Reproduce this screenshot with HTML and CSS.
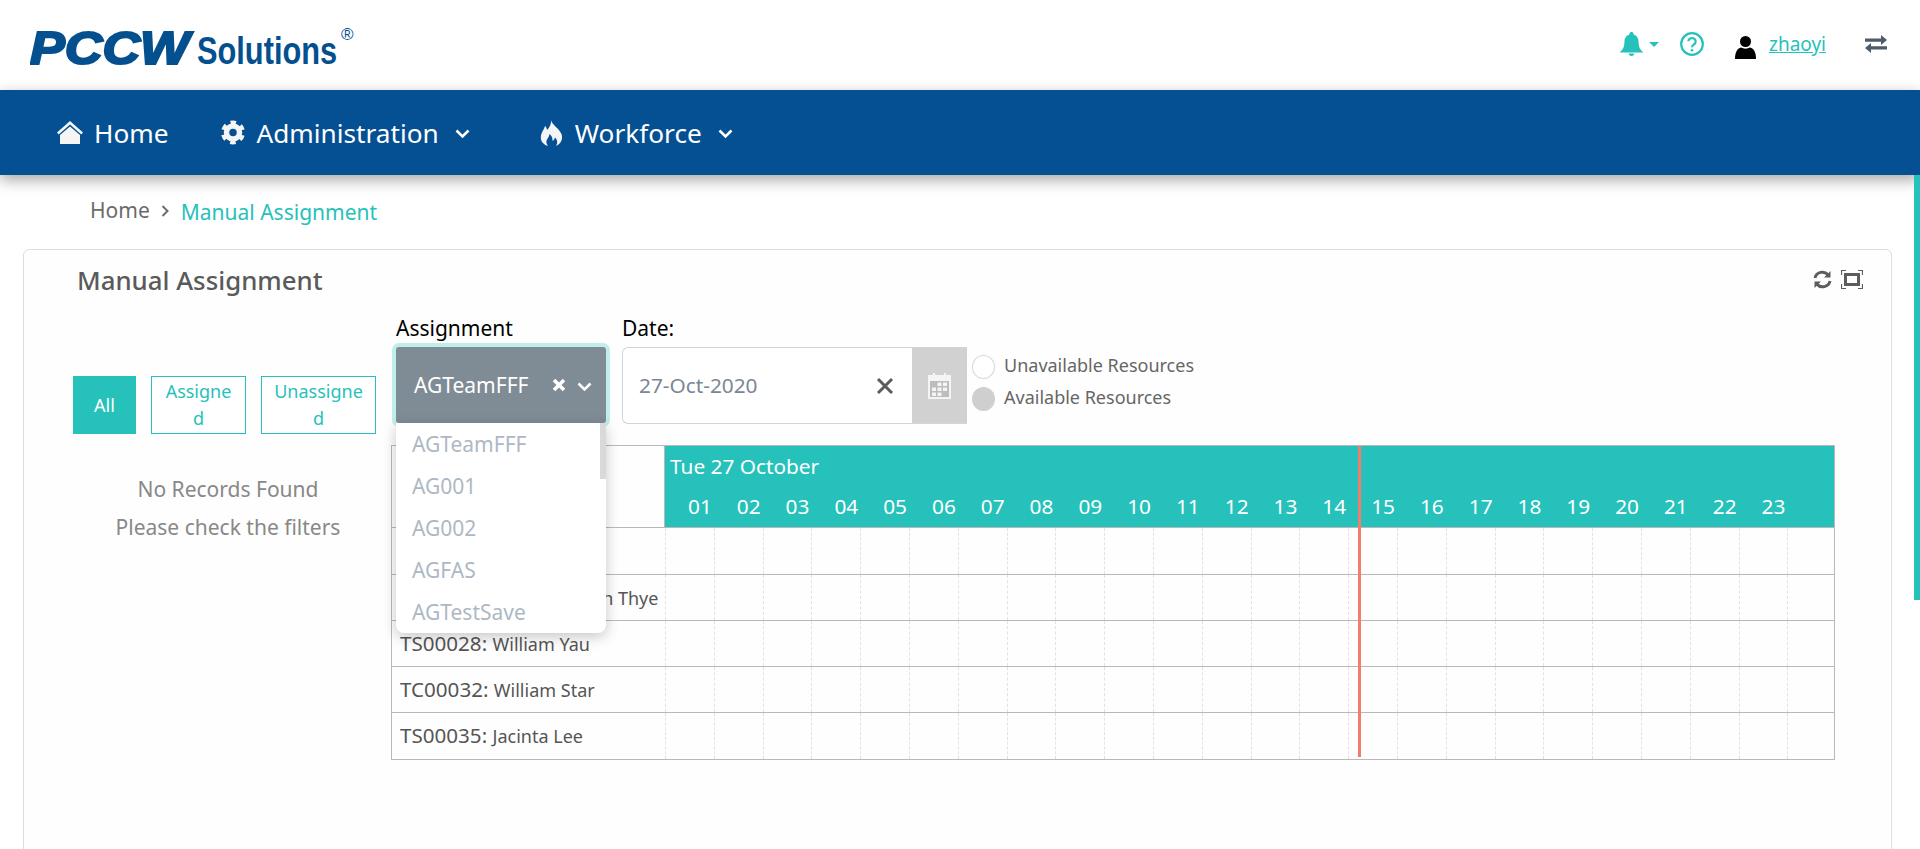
FILE: index.html
```html
<!DOCTYPE html>
<html>
<head>
<meta charset="utf-8">
<title>Manual Assignment</title>
<link rel="stylesheet" href="styles.css">
</head>
<body>

<div class="topbar">
	<svg class="logo" width="340" height="70" viewBox="0 0 340 70">
		<text class="logoMain" transform="translate(0 54) scale(1.11 1)">PCCW</text>
		<text class="logoSub" transform="translate(167 54) scale(.81 1)">Solutions</text>
		<text class="logoReg" x="311" y="30">®</text>
	</svg>
	<div class="topIcons">
		<svg class="icoBell" width="25" height="24" viewBox="0 0 25 24"><path d="M12.500 0a2 2 0 0 1 2 2.600c3.400 1 5.100 3.800 5.100 7.400 0 5 1.400 7.600 4.900 10.500H.5C4 17.600 5.400 15 5.400 10c0-3.600 1.700-6.400 5.100-7.400a2 2 0 0 1 2-2.600zM9.800 21.500h5.400a2.700 2.500 0 0 1-5.400 0z"/></svg>
		<span class="caret"></span>
		<svg class="icoHelp" width="24" height="24" viewBox="0 0 24 24"><circle cx="12" cy="12" r="10.800"/><path d="M8.300 9.300a3.700 3.400 0 1 1 5.700 3c-1.300.9-2 1.400-2 2.900"/><circle class="dot" cx="12" cy="18.300" r="1.300"/></svg>
		<svg class="icoUser" width="21" height="23" viewBox="0 0 21 23"><circle cx="10.500" cy="5.500" r="5.500"/><path d="M0 23c0-6.500 2-10.500 6-11.500 2.500 1.500 6.500 1.500 9 0 4 1 6 5 6 11.500z"/></svg>
		<a class="userName">zhaoyi</a>
		<svg class="icoSwap" width="22" height="18" viewBox="0 0 22 18"><path d="M0 3.500h16V0l6 5-6 5V6.700H0zM22 11.300v3.200H6V18l-6-5 6-5v3.300z"/></svg>
	</div>
</div>

<div class="navbar">
	<div class="navItem navHome">
		<svg width="26" height="23" viewBox="0 0 26 23"><path d="M13 0 26 11.500l-1.700 1.900L13 3.400 1.700 13.400 0 11.500z"/><path d="M13 5.500 23 14v9H3v-9z"/></svg>
		Home
	</div>
	<div class="navItem navAdmin">
		<svg width="24" height="25" viewBox="0 0 24 24"><circle class="gearTeeth" cx="12" cy="12" r="10.200" transform="rotate(-30 12 12)"/><circle class="gearRing" cx="12" cy="12" r="6.500"/></svg>
		Administration
		<svg class="chev" width="15" height="10" viewBox="0 0 15 10"><path d="M1.500 1.500 7.500 7.500l6-6"/></svg>
	</div>
	<div class="navItem navWork">
		<svg width="23" height="26" viewBox="0 0 23 26"><path d="M11 0c1 5 8 8 10.500 14 1.700 5-.6 10-5.500 12 2-3 1.500-6-1-8.500-.5 2-1.500 3-2.500 3.500.3-3-1-5.500-3-7-.2 3-2.500 4.500-3 7-.4 2 .3 3.700 1.500 5C3 24.500 0 21 1 15.500 2 11 4 10 5 6c1.200 1 1.800 2.300 2 4C9.500 7.500 11.500 4 11 0z"/></svg>
		Workforce
		<svg class="chev" width="15" height="10" viewBox="0 0 15 10"><path d="M1.500 1.500 7.500 7.500l6-6"/></svg>
	</div>
</div>

<div class="crumbs">
	<span class="crumbHome">Home</span>
	<svg class="crumbSep" width="8" height="12" viewBox="0 0 8 12"><path d="M1.500 1 6.500 6l-5 5"/></svg>
	<span class="crumbNow">Manual Assignment</span>
</div>

<div class="panel">
	<div class="panelHead">
		<h2>Manual Assignment</h2>
		<div class="panelTools">
			<svg width="19" height="19" viewBox="0 0 19 19"><path d="M2 8a7.500 7.500 0 0 1 13-3.200M17 11a7.500 7.500 0 0 1-13 3.200"/><path class="fill" d="M17.500 1v6.500H11zM1.500 18v-6.500H8z"/></svg>
			<svg width="22" height="19" viewBox="0 0 22 19"><path class="thin" d="M.5 5V.5H5M17 .5h4.500V5M21.500 14v4.500H17M5 18.500H.5V14"/><rect x="4.500" y="4.500" width="13" height="10"/></svg>
		</div>
	</div>

	<div class="panelBody">
		<div class="sideCol">
			<div class="filterBtns">
				<div class="fBtn fBtnOn">All</div>
				<div class="fBtn fBtnMid">Assigned</div>
				<div class="fBtn fBtnWide">Unassigned</div>
			</div>
			<p class="noRec">No Records Found</p>
			<p class="noRec">Please check the filters</p>
		</div>

		<div class="mainCol">
			<div class="filterRow">
				<div class="assignBox">
					<label>Assignment</label>
					<div class="selectBox">
						<span class="selVal">AGTeamFFF</span>
						<svg class="selX" width="16" height="16" viewBox="0 0 16 16"><path d="M3 3l10 10M13 3 3 13"/></svg>
						<svg class="selChev" width="15" height="10" viewBox="0 0 15 10"><path d="M1.500 1.500 7.500 7.500l6-6"/></svg>
					</div>
					<div class="dropList">
						<div class="dropThumb"></div>
						<div class="dropOpt">AGTeamFFF</div>
						<div class="dropOpt">AG001</div>
						<div class="dropOpt">AG002</div>
						<div class="dropOpt">AGFAS</div>
						<div class="dropOpt">AGTestSave</div>
					</div>
				</div>
				<div class="dateBox">
					<label>Date:</label>
					<div class="dateField">
						<span class="dateVal">27-Oct-2020</span>
						<svg class="dateX" width="18" height="18" viewBox="0 0 18 18"><path d="M2 2l14 14M16 2 2 16"/></svg>
						<div class="dateBtn">
							<svg width="23" height="26" viewBox="0 0 23 26"><path d="M0 2h5V0h2v2h9V0h2v2h5v24H0z"/><rect class="calGrid" x="2" y="8" width="19" height="16"/><g class="calCells"><rect x="9.500" y="9.500" width="4" height="3.500"/><rect x="15" y="9.500" width="4" height="3.500"/><rect x="4" y="14.500" width="4" height="3.500"/><rect x="9.500" y="14.500" width="4" height="3.500"/><rect x="15" y="14.500" width="4" height="3.500"/><rect x="4" y="19.500" width="4" height="3.500"/><rect x="9.500" y="19.500" width="4" height="3.500"/></g></svg>
						</div>
					</div>
				</div>
				<div class="legend">
					<div class="legendRow"><span class="dotFree"></span>Unavailable Resources</div>
					<div class="legendRow"><span class="dotBusy"></span>Available Resources</div>
				</div>
			</div>

			<div class="sched" id="sched">
				<div class="schedHead">
					<div class="nameCorner"></div>
					<div class="headRight">
						<div class="headDate">Tue 27 October</div>
						<div class="hours" id="hours"></div>
					</div>
				</div>
				<div id="rows"></div>
				<div class="nowLine"></div>
			</div>
		</div>
	</div>
</div>

<div class="pageThumb"></div>

<script src="app.js"></script>
</body>
</html>
```

FILE: app.js
```js
var people = [
	["", ""],
	["TS00021: ", "Tan Kian Boon Thye"],
	["TS00028: ", "William Yau"],
	["TC00032: ", "William Star"],
	["TS00035: ", "Jacinta Lee"]
];

var hours = document.getElementById("hours");
for (let i = 1; i <= 24; i++) {
	const h = document.createElement("div");
	h.className = "hourCell";
	if (i < 24) {
		h.textContent = (i < 10 ? "0" : "") + i;
	}
	hours.appendChild(h);
}

var rows = document.getElementById("rows");
people.forEach(p => {
	const row = document.createElement("div");
	row.className = "schedRow";
	const name = document.createElement("div");
	name.className = "nameCell";
	name.innerHTML = p[0] + "<small>" + p[1] + "</small>";
	row.appendChild(name);
	const track = document.createElement("div");
	track.className = "track";
	for (let i = 0; i < 24; i++) {
		const c = document.createElement("div");
		c.className = "slot";
		track.appendChild(c);
	}
	row.appendChild(track);
	rows.appendChild(row);
});
```

FILE: styles.css
```css
html, body {margin: 0; padding: 0; height: 849px; overflow: hidden; background: #fff;}
body {font-family: "Noto Sans", sans-serif; color: #555;}

/* Top bar */
.topbar {height: 90px; display: flex; justify-content: space-between; background: #fff;}
.logo {margin: 10px 0 0 30px; display: block;}
.logoMain {font-family: "Liberation Sans", sans-serif; font-weight: bold; font-style: italic; font-size: 47px; fill: #04508f; stroke: #04508f; stroke-width: 2.200px;}
.logoSub {font-family: "Liberation Sans", sans-serif; font-weight: bold; font-size: 38px; fill: #04508f;}
.logoReg {font-family: "Liberation Sans", sans-serif; font-size: 17px; fill: #04508f;}
.topIcons {display: flex; align-items: flex-start; padding: 32px 33px 0 0;}
.icoBell {fill: #27c1bb;}
.caret {width: 0; height: 0; margin: 10px 0 0 5px; border-left: 5px solid transparent; border-right: 5px solid transparent; border-top: 5px solid #27c1bb;}
.icoHelp {margin-left: 21px; fill: none; stroke: #27c1bb; stroke-width: 2.200px;}
.icoHelp .dot {fill: #27c1bb; stroke: none;}
.icoUser {margin: 4px 0 0 31px; fill: #000;}
.userName {margin: 0 0 0 13px; font-size: 19px; line-height: 24px; color: #27c1bb; text-decoration: underline;}
.icoSwap {margin: 3px 0 0 39px; fill: #4d5b6b;}

/* Nav */
.navbar {height: 85px; display: flex; align-items: center; background: #045092; box-shadow: 0 5px 14px rgba(0,0,0,0.35); position: relative; color: #fff; font-size: 26.200px;}
.navItem {display: flex; align-items: center;}
.navItem svg {fill: #f5f5f5;}
.navHome {margin-left: 57px;}
.navHome svg {margin-right: 11px;}
.navAdmin {margin-left: 52px;}
.navAdmin svg {margin-right: 12px;}
.navWork {margin-left: 70px;}
.navWork svg {margin-right: 12px;}
.navItem .gearTeeth {fill: none; stroke: #f5f5f5; stroke-width: 3.600px; stroke-dasharray: 5.400 5.280; stroke-dashoffset: 2.700;}
.navItem .gearRing {fill: none; stroke: #f5f5f5; stroke-width: 5.500px;}
.navItem .chev {fill: none; stroke: #fff; stroke-width: 2.600px; margin: 2px 0 0 16px;}

/* Breadcrumb */
.crumbs {box-sizing: border-box; height: 74px; display: flex; align-items: center; padding: 0 0 2px 90px; font-size: 21px;}
.crumbHome {color: #6b6b6b; margin-top: -2px;}
.crumbSep {margin: 0 12px 0 11px; fill: none; stroke: #6b6b6b; stroke-width: 2px;}
.crumbNow {color: #27c1bb; margin-top: 1px;}

/* Panel */
.panel {margin: 0 28px 0 23px; height: 640px; border: 1px solid #dedede; border-radius: 6px; background: #fefefe;}
.panelHead {display: flex; justify-content: space-between; padding: 13px 28px 0 53px;}
.panelHead h2 {margin: -1px 0 1px; font-size: 25.800px; line-height: 36px; font-weight: 500; color: #5a5a5a;}
.panelTools {display: flex; gap: 9px; padding-top: 7px;}
.panelTools svg {fill: none; stroke: #5c5c5c; stroke-width: 3px;}
.panelTools .fill {fill: #5c5c5c; stroke: none;}
.panelTools .thin {stroke-width: 1.200px;}

.panelBody {display: flex; align-items: flex-start; padding-left: 49px;}
.sideCol {width: 303px; padding-top: 77px; flex-shrink: 0;}
.filterBtns {display: flex; gap: 15px; margin-bottom: 41px;}
.fBtn {box-sizing: border-box; height: 58px; display: flex; align-items: center; justify-content: center; text-align: center; border: 1px solid #27c1bb; color: #27c1bb; font-size: 18px; line-height: 27px; word-break: break-all; background: #fff;}
.fBtnOn {width: 63px; background: #27c1bb; color: #fff;}
.fBtnMid {width: 95px; padding: 0 10px;}
.fBtnWide {width: 115px; padding: 0 10px;}
.noRec {margin: 0 0 10px; width: 310px; text-align: center; font-size: 21px; line-height: 28px; color: #888;}

.mainCol {flex: 1; padding: 16px 56px 0 15px;}
.filterRow {display: flex; align-items: flex-start; height: 130px;}
.assignBox {position: relative; width: 210px; margin-left: 5px;}
.assignBox label, .dateBox label {display: block; font-size: 21px; line-height: 26px; height: 32px; color: #000;}
.selectBox {box-sizing: border-box; height: 76px; display: flex; align-items: center; padding: 0 14px 0 18px; background: #7f8b95; border-radius: 3px; box-shadow: 0 0 0 4px #bfeeeb; color: #fff; font-size: 21px;}
.selVal {flex: 1;}
.selX {fill: none; stroke: #fff; stroke-width: 3.600px; margin-right: 10px;}
.selChev {fill: none; stroke: #fff; stroke-width: 2.600px; margin-top: 3px;}

.dropList {position: absolute; left: 0; top: 108px; width: 210px; height: 210px; box-sizing: border-box; background: #fff; border-radius: 0 0 8px 8px; box-shadow: 0 4px 14px rgba(0,0,0,0.22); z-index: 5;}
.dropThumb {position: absolute; right: 0; top: 0; width: 6px; height: 56px; background: #d9d9d9;}
.dropOpt {height: 42px; line-height: 43px; padding-left: 16px; font-size: 21px; color: #aeb8c4;}

.dateBox {width: 345px; margin-left: 16px;}
.dateField {box-sizing: border-box; height: 77px; width: 345px; display: flex; align-items: center; background: #fff; border: 1px solid #d2d6dc; border-right: 0; border-radius: 6px 0 0 6px;}
.dateVal {flex: 1; padding: 0 0 2px 16px; font-size: 20.800px; color: #7b8794;}
.dateX {fill: none; stroke: #5c5c5c; stroke-width: 3px; margin-right: 18px;}
.dateBtn {width: 55px; height: 75px; display: flex; align-items: center; justify-content: center; background: #d1d1d1;}
.dateBtn svg {fill: #f4f4f4;}
.calGrid {fill: #bdbdbd;}
.calCells rect {fill: #f4f4f4;}

.legend {margin: 34px 0 0 5px; font-size: 18px; color: #666;}
.legendRow {display: flex; align-items: center; height: 32px; line-height: 32px;}
.dotFree, .dotBusy {box-sizing: border-box; width: 23px; height: 24px; border-radius: 50%; margin: 4px 9px 0 0;}
.dotFree {background: #fff; border: 1px solid #d8d8d8;}
.dotBusy {background: #cfcfcf;}

/* Schedule */
.sched {position: relative; width: 1444px; box-sizing: border-box; border: 1px solid #b9b9b9;}
.schedHead {display: flex; height: 81px; border-bottom: 1px solid #b9b9b9;}
.nameCorner {width: 272px; flex-shrink: 0; border-right: 1px solid #b9b9b9;}
.headRight {flex: 1; min-width: 0; background: #27c1bb; color: #fff;}
.headDate {height: 42px; line-height: 41px; padding-left: 5px; font-size: 20.800px;}
.hours {display: flex;}
.hourCell {width: 48.800px; flex-shrink: 0; box-sizing: border-box; padding-left: 21px; height: 38px; line-height: 37px; text-align: center; font-size: 20.800px;}
.schedRow {display: flex; height: 46px; box-sizing: border-box; border-bottom: 1px solid #b9b9b9;}
.schedRow:first-child {height: 47px;}
.schedRow:last-child {border-bottom: 0;}
.nameCell {width: 273px; box-sizing: border-box; flex-shrink: 0; padding-left: 8px; line-height: 44px; font-size: 20.600px; color: #555; white-space: nowrap;}
.nameCell small {font-size: 18px;}
.track {display: flex; flex: 1; min-width: 0;}
.slot {width: 48.800px; flex-shrink: 0; box-sizing: border-box; border-left: 1px dashed #e2e2e2;}
.nowLine {position: absolute; left: 966px; top: 0; bottom: 2px; width: 3px; background: #f47c6c;}

.pageThumb {position: absolute; right: 0; top: 175px; width: 6px; height: 425px; background: #27c1bb;}
```
